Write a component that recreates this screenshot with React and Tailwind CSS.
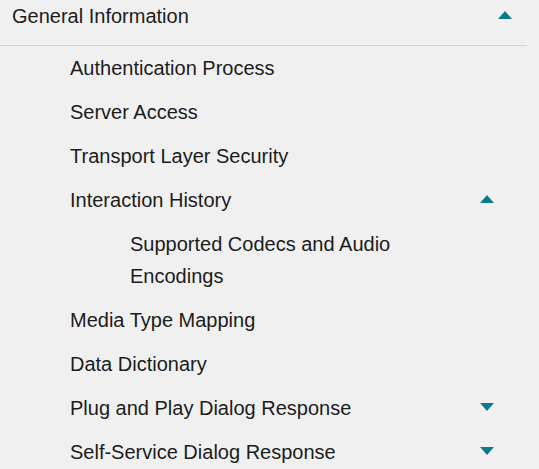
import React, { useState } from 'react';

const Caret = ({ up }) => (
    <svg width="14" height="8" viewBox="0 0 14 8" className="shrink-0">
        {up ? <path d="M0 8 L7 0 L14 8 Z" fill="#0b7a8a" /> : <path d="M0 0 L7 8 L14 0 Z" fill="#0b7a8a" />}
    </svg>
);

const items = [
    { label: 'Authentication Process' },
    { label: 'Server Access' },
    { label: 'Transport Layer Security' },
    { label: 'Interaction History', open: true, children: ['Supported Codecs and Audio Encodings'] },
    { label: 'Media Type Mapping' },
    { label: 'Data Dictionary' },
    { label: 'Plug and Play Dialog Response', open: false, children: [] },
    { label: 'Self-Service Dialog Response', open: false, children: [] },
];

export default function App() {
    const [open, setOpen] = useState(true);

    return (
        <div className="w-[539px] h-[469px] overflow-hidden bg-[#f0f0f0] text-[#1c1c1c]" style={{ fontFamily: '"Liberation Sans", Arial, sans-serif' }}>
            <div className="w-[527px]">
                {/* Section header */}
                <button
                    onClick={() => setOpen(!open)}
                    className="w-full flex items-start justify-between pl-3 pr-[15px] pb-[13px] border-b border-[#d4d4d4] text-left"
                >
                    <span className="text-[20px] leading-8">General Information</span>
                    <span className="mt-[11px]"><Caret up={open} /></span>
                </button>

                {/* Links */}
                {open && (
                    <ul className="pr-[33px]">
                        {items.map((item) => (
                            <li key={item.label}>
                                <div className="flex items-start justify-between pl-[70px] py-[6px]">
                                    <span className="text-[20px] leading-8">{item.label}</span>
                                    {item.children && (
                                        <span className="mt-[11px]"><Caret up={item.open} /></span>
                                    )}
                                </div>
                                {item.open && item.children.map((child) => (
                                    <div key={child} className="pl-[130px] pr-[80px] py-[6px]">
                                        <span className="text-[20px] leading-8">{child}</span>
                                    </div>
                                ))}
                            </li>
                        ))}
                    </ul>
                )}
            </div>
        </div>
    );
}
